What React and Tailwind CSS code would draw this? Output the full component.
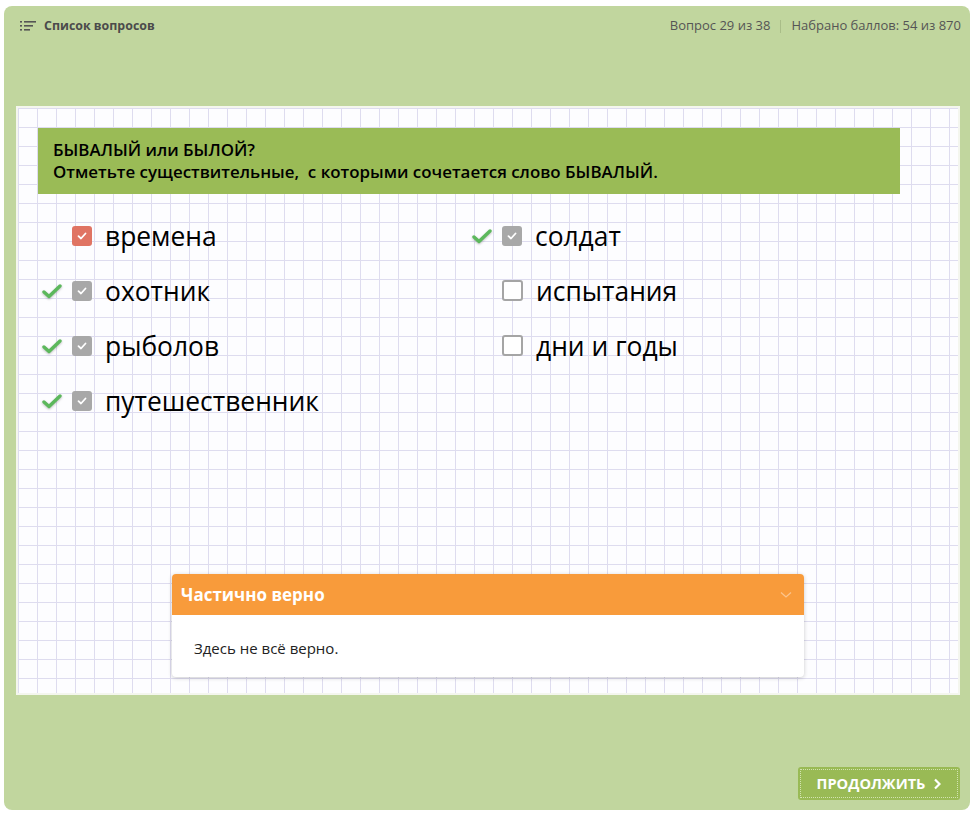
import React from 'react';

const OPTIONS_LEFT = [
  { text: 'времена', state: 'wrong' },
  { text: 'охотник', state: 'right' },
  { text: 'рыболов', state: 'right' },
  { text: 'путешественник', state: 'right' },
];

const OPTIONS_RIGHT = [
  { text: 'солдат', state: 'right' },
  { text: 'испытания', state: 'empty' },
  { text: 'дни и годы', state: 'empty' },
];

function GreenCheck() {
  return (
    <svg width="20" height="16" viewBox="0 0 20 16" className="drop-shadow-[0_1px_1px_rgba(0,0,0,0.25)]">
      <path d="M2 9 L7 13.5 L18 3" fill="none" stroke="#5cb85c" strokeWidth="3.4" strokeLinecap="round" strokeLinejoin="round" />
    </svg>
  );
}

function SmallTick() {
  return (
    <svg width="12" height="12" viewBox="0 0 12 12">
      <path d="M2.5 6.2 L5 8.5 L9.5 3.5" fill="none" stroke="#fff" strokeWidth="1.8" strokeLinecap="round" strokeLinejoin="round" />
    </svg>
  );
}

function Option({ text, state }) {
  return (
    <div className="flex items-center h-[55px]">
      <div className="w-[20px] flex justify-center">{state === 'right' && <GreenCheck />}</div>
      <div className="ml-[10px]">
        {state === 'wrong' && (
          <div className="w-[20px] h-[20px] rounded-[3px] bg-[#e07463] flex items-center justify-center">
            <SmallTick />
          </div>
        )}
        {state === 'right' && (
          <div className="w-[20px] h-[20px] rounded-[3px] bg-[#a8a8a8] flex items-center justify-center">
            <SmallTick />
          </div>
        )}
        {state === 'empty' && (
          <div className="w-[21px] h-[21px] rounded-[3px] bg-white border-2 border-[#a5a5a5]" />
        )}
      </div>
      <div className="ml-[13px] text-[26.4px] text-black leading-none pt-[2px]">{text}</div>
    </div>
  );
}

export default function App() {
  return (
    <div className="w-[978px] h-[815px] bg-white pt-[6px] pl-[4px]" style={{ fontFamily: '"Open Sans", "Noto Sans", sans-serif' }}>
      <div className="w-[966px] h-[804px] bg-[#c1d69e] rounded-[8px] flex flex-col">
        {/* Header */}
        <div className="h-[100px] flex justify-between pl-[16px] pr-[9px] pt-[11px]">
          <div className="flex items-center gap-[8px] h-[18px] text-[12.4px] font-bold text-[#4b4b4b]">
            <svg width="16" height="12" viewBox="0 0 16 12">
              <g fill="#555">
                <rect x="0" y="1" width="2" height="1.6" />
                <rect x="0" y="5" width="2" height="1.6" />
                <rect x="0" y="9" width="2" height="1.6" />
                <rect x="4" y="1" width="12" height="1.6" />
                <rect x="4" y="5" width="9" height="1.6" />
                <rect x="4" y="9" width="6" height="1.6" />
              </g>
            </svg>
            <span>Список вопросов</span>
          </div>
          <div className="flex items-center h-[18px] text-[13px] text-[#555]">
            <span>Вопрос 29 из 38</span>
            <span className="mx-[10px] w-px h-[13px] bg-[#a9bd88]" />
            <span>Набрано баллов: 54 из 870</span>
          </div>
        </div>

        {/* Work area */}
        <div
          className="ml-[12px] w-[944px] h-[589px] border-2 border-[#f4f6ee] bg-[#fdfdff] bg-[linear-gradient(to_right,#dedcef_1px,transparent_1px),linear-gradient(to_bottom,#dedcef_1px,transparent_1px)] bg-[size:19px_19px] flex flex-col"
        >
          <div className="mt-[20px] ml-[20px] w-[862px] h-[66px] bg-[#9abb56] px-[15px] py-[11px] text-[16.9px] font-semibold text-black leading-[22px]">
            <div>БЫВАЛЫЙ или БЫЛОЙ?</div>
            <div>Отметьте существительные,&nbsp; с которыми сочетается слово БЫВАЛЫЙ.</div>
          </div>

          <div className="mt-[14px] flex">
            <div className="ml-[24px] w-[430px] flex flex-col">
              {OPTIONS_LEFT.map((o) => (
                <Option key={o.text} {...o} />
              ))}
            </div>
            <div className="flex flex-col">
              {OPTIONS_RIGHT.map((o) => (
                <Option key={o.text} {...o} />
              ))}
            </div>
          </div>

          {/* Feedback */}
          <div className="mt-auto mb-[16px] mx-auto w-[632px] rounded-[4px] bg-white shadow-[0_1px_4px_rgba(0,0,0,0.2)] overflow-hidden">
            <div className="h-[41px] bg-[#f89b3b] flex items-center justify-between pl-[9px] pr-[12px]">
              <span className="text-[17px] font-bold text-white pt-[1px]">Частично верно</span>
              <svg width="12" height="8" viewBox="0 0 12 8">
                <path d="M1 1.5 L6 6 L11 1.5" fill="none" stroke="#fbc48c" strokeWidth="1.3" />
              </svg>
            </div>
            <div className="h-[62px] flex items-center pl-[22px] pt-[5px] text-[15px] text-[#222]">
              Здесь не всё верно.
            </div>
          </div>
        </div>

        {/* Footer */}
        <div className="flex-1 flex justify-end items-end pr-[10px] pb-[10px]">
          <button className="w-[162px] h-[33px] rounded-[3px] bg-[#99ba55] p-[2px]">
            <div className="w-full h-full border border-dotted border-[#d2e3b0] flex items-center justify-center gap-[8px] text-[14.6px] font-bold text-white">
              <span>ПРОДОЛЖИТЬ</span>
              <svg width="8" height="12" viewBox="0 0 8 12">
                <path d="M2 1.5 L6.5 6 L2 10.5" fill="none" stroke="#fff" strokeWidth="2.2" />
              </svg>
            </div>
          </button>
        </div>
      </div>
    </div>
  );
}
